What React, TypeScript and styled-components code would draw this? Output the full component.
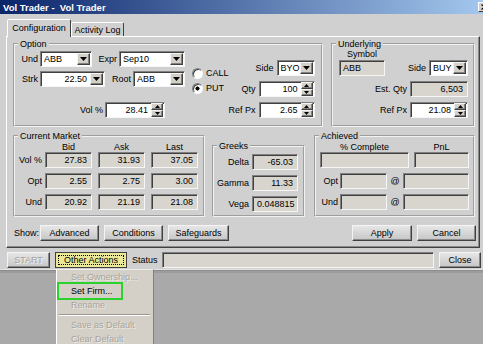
import React from "react";
import styled, { createGlobalStyle, css } from "styled-components";

const GlobalStyle = createGlobalStyle`
  html, body { margin: 0; padding: 0; }
  body {
    background: #a9a9a9;
    font-family: "Liberation Sans", Arial, sans-serif;
    font-size: 9px;
    color: #000;
    overflow: hidden;
  }
`;

const Screen = styled.div`
  position: relative;
  width: 483px;
  height: 344px;
  overflow: hidden;
  background: #a9a9a9;
`;

const Window = styled.div`
  box-sizing: border-box;
  width: 493px;
  height: 270px;
  background: #d0d0d0;
  display: flex;
  flex-direction: column;
  border-bottom: 1px solid #e4e4e4;
  box-shadow: 0 1px 0 #8c8c8c, 0 3px 0 #9c9c9c;
`;

const TitleBar = styled.div`
  height: 14px;
  flex: none;
  display: flex;
  align-items: center;
  justify-content: space-between;
  padding: 0 2px 0 3px;
  background: linear-gradient(to right, #0a246a, #a6caf0);
  color: #fff;
  font-weight: bold;
  font-size: 9.5px;
  white-space: pre;
`;

const CloseBox = styled.div`
  box-sizing: border-box;
  width: 13px;
  height: 10px;
  background: #d4d0c8;
  border: 1px solid;
  border-color: #fff #404040 #404040 #fff;
  display: flex;
  align-items: center;
  justify-content: center;
`;

const Body = styled.div`
  flex: 1;
  display: flex;
  flex-direction: column;
  padding: 5px 13px 0 6px;
`;

const TabStrip = styled.div`
  height: 17px;
  display: flex;
  align-items: flex-end;
  padding-left: 1px;
`;

const Tab = styled.div<{ $active?: boolean; $w: number }>`
  box-sizing: border-box;
  position: relative;
  width: ${(p) => p.$w}px;
  height: ${(p) => (p.$active ? 18 : 14)}px;
  margin-bottom: ${(p) => (p.$active ? -1 : 0)}px;
  z-index: ${(p) => (p.$active ? 1 : 0)};
  display: flex;
  align-items: center;
  justify-content: center;
  padding-bottom: ${(p) => (p.$active ? 2 : 0)}px;
  background: #d0d0d0;
  border: 1px solid;
  border-bottom: none;
  border-color: #fff #404040 transparent #fff;
  border-radius: 2px 2px 0 0;
  white-space: nowrap;
`;

const Panel = styled.div`
  box-sizing: border-box;
  height: 212px;
  flex: none;
  display: flex;
  flex-direction: column;
  padding: 2px 4px 0 6px;
  border: 1px solid;
  border-color: #fff #404040 #404040 #fff;
  box-shadow: inset -1px -1px 0 #8a8a8a;
`;

const GroupRow = styled.div<{ $top?: number }>`
  display: flex;
  align-items: flex-start;
  margin-top: ${(p) => p.$top ?? 0}px;
`;

const Group = styled.fieldset<{ $w: number; $h: number; $ml?: number; $mt?: number }>`
  box-sizing: border-box;
  width: ${(p) => p.$w}px;
  height: ${(p) => p.$h}px;
  margin: ${(p) => p.$mt ?? 0}px 0 0 ${(p) => p.$ml ?? 0}px;
  padding: 0;
  min-width: 0;
  border: 2px groove #f2f2f2;
`;

const Legend = styled.legend`
  padding: 0 2px;
  margin-left: 3px;
  line-height: 10px;
`;

const Row = styled.div<{ $top?: number }>`
  display: flex;
  align-items: center;
  margin-top: ${(p) => p.$top ?? 0}px;
`;

const Label = styled.span<{ $w?: number; $gap?: number }>`
  flex: none;
  ${(p) => (p.$w !== undefined ? `width: ${p.$w}px;` : "")}
  margin-right: ${(p) => p.$gap ?? 3}px;
  text-align: right;
  white-space: nowrap;
`;

const Field = styled.div<{ $w: number; $ro?: boolean }>`
  box-sizing: border-box;
  flex: none;
  width: ${(p) => p.$w}px;
  height: 16px;
  display: flex;
  align-items: center;
  padding: 0 1px 0 1px;
  border: 1px solid;
  border-color: #808080 #f6f6f6 #f6f6f6 #808080;
  box-shadow: inset 1px 1px 0 #404040;
  background: ${(p) => (p.$ro ? "#d8d5cf" : "#fff")};
  overflow: hidden;
`;

const Value = styled.span<{ $right?: boolean }>`
  flex: 1;
  padding: ${(p) => (p.$right ? "0 3px" : "0 1px 0 2px")};
  text-align: ${(p) => (p.$right ? "right" : "left")};
  white-space: nowrap;
  overflow: hidden;
`;

const raised = css`
  background: #d4d0c8;
  border: 1px solid;
  border-color: #f4f4f4 #404040 #404040 #f4f4f4;
  box-shadow: inset -1px -1px 0 #808080;
`;

const DropButton = styled.span`
  box-sizing: border-box;
  flex: none;
  width: 13px;
  height: 12px;
  display: flex;
  align-items: center;
  justify-content: center;
  ${raised}
`;

const SpinButtons = styled.span`
  flex: none;
  width: 12px;
  height: 14px;
  display: flex;
  flex-direction: column;
`;

const SpinButton = styled.span`
  box-sizing: border-box;
  flex: 1;
  display: flex;
  align-items: center;
  justify-content: center;
  ${raised}
`;

const Button = styled.button<{ $w: number; $focus?: boolean }>`
  box-sizing: border-box;
  flex: none;
  width: ${(p) => p.$w}px;
  height: 16px;
  margin: 0;
  padding: 0;
  font: inherit;
  color: #000;
  display: flex;
  align-items: center;
  justify-content: center;
  white-space: nowrap;
  border: 1px solid;
  border-color: #f4f4f4 #404040 #404040 #f4f4f4;
  box-shadow: inset -1px -1px 0 #8a8a8a;
  background: linear-gradient(#e6e6e6, #c6c6c6);
  &:disabled {
    color: #a4a4a4;
    text-shadow: 1px 1px 0 #f2f2f2;
  }
  ${(p) =>
    p.$focus &&
    css`
      border-color: #404040;
      box-shadow: none;
      background: #ebe996;
      outline: 1px dotted #000;
      outline-offset: -4px;
    `}
`;

const OptionBody = styled.div`
  display: flex;
  padding: 2px 7px 0 0;
`;

const Column = styled.div`
  display: flex;
  flex-direction: column;
`;

const RadioCol = styled.div`
  display: flex;
  flex-direction: column;
  gap: 1px;
  margin-left: 7px;
  padding-top: 15px;
`;

const RadioRow = styled.label`
  display: flex;
  align-items: center;
  gap: 3px;
  height: 14px;
`;

const RadioDot = styled.span<{ $on?: boolean }>`
  box-sizing: border-box;
  width: 11px;
  height: 11px;
  border-radius: 50%;
  border: 1px solid;
  border-color: #808080 #fafafa #fafafa #808080;
  box-shadow: inset 1px 1px 0 #404040;
  background: ${(p) =>
    p.$on ? "radial-gradient(circle, #000 0 1.8px, #fff 2.3px)" : "#fff"};
`;

const RightCol = styled.div<{ $top?: number }>`
  margin-left: auto;
  display: flex;
  flex-direction: column;
  align-items: flex-end;
  gap: 5px;
  padding-top: ${(p) => p.$top ?? 0}px;
`;

const UnderBody = styled.div`
  display: flex;
  flex-direction: column;
  padding: 0 5px 0 6px;
`;

const SymbolCol = styled.div`
  display: flex;
  flex-direction: column;
  align-items: center;
`;

const Caption = styled.span`
  line-height: 11px;
`;

const Push = styled.div`
  margin-left: auto;
  align-self: flex-end;
  display: flex;
  align-items: center;
`;

const GridBody = styled.div<{ $pl?: number; $pt?: number }>`
  display: flex;
  flex-direction: column;
  gap: 5px;
  padding-left: ${(p) => p.$pl ?? 0}px;
  padding-top: ${(p) => p.$pt ?? 0}px;
`;

const HeadRow = styled.div`
  display: flex;
  height: 11px;
  align-items: center;
  margin-bottom: -5px;
`;

const Cells = styled.div<{ $gap?: number }>`
  display: flex;
  align-items: center;
  gap: ${(p) => p.$gap ?? 6}px;
`;

const Head = styled.span<{ $w: number }>`
  width: ${(p) => p.$w}px;
  text-align: center;
  white-space: nowrap;
`;

const At = styled.span`
  width: 16px;
  text-align: center;
`;

const ShowRow = styled.div`
  display: flex;
  align-items: center;
  gap: 5px;
  margin: 8px -1px 0 1px;
  height: 16px;
`;

const ShowLabel = styled.span`
  width: 21px;
  white-space: nowrap;
`;

const Spacer = styled.div`
  flex: 1;
`;

const BottomRow = styled.div`
  display: flex;
  align-items: center;
  gap: 5px;
  height: 16px;
  margin: 4px -2px 0 1px;
`;

const StatusLabel = styled.span`
  width: 25px;
`;

const Menu = styled.div`
  position: absolute;
  left: 56px;
  top: 269px;
  width: 98px;
  height: 80px;
  box-sizing: border-box;
  background: #d4d0c8;
  border-left: 1px solid #fff;
  border-top: 1px solid #ececec;
  border-right: 1px solid #808080;
`;

const MenuItem = styled.div<{ $disabled?: boolean }>`
  position: relative;
  height: 14px;
  line-height: 14px;
  padding-left: 14px;
  white-space: nowrap;
  color: ${(p) => (p.$disabled ? "#a8a49c" : "#000")};
  text-shadow: ${(p) => (p.$disabled ? "1px 1px 0 #ecebe6" : "none")};
`;

const Highlight = styled.span`
  position: absolute;
  left: 0;
  top: -2px;
  width: 66px;
  height: 18px;
  box-sizing: border-box;
  border: 2px solid #2bd22b;
`;

const MenuSep = styled.div`
  margin: 2px 3px 2px 2px;
  border-top: 1px solid #9a968e;
  border-bottom: 1px solid #fff;
`;

const ArrowDown = () => (
  <svg width="7" height="4" viewBox="0 0 7 4">
    <path d="M0 0h7L3.5 4z" fill="#000" />
  </svg>
);

const TinyUp = () => (
  <svg width="5" height="3" viewBox="0 0 5 3">
    <path d="M0 3h5L2.5 0z" fill="#000" />
  </svg>
);

const TinyDown = () => (
  <svg width="5" height="3" viewBox="0 0 5 3">
    <path d="M0 0h5L2.5 3z" fill="#000" />
  </svg>
);

type BoxProps = { w: number; value: string; right?: boolean };

const Combo = ({ w, value, right }: BoxProps) => (
  <Field $w={w}>
    <Value $right={right}>{value}</Value>
    <DropButton>
      <ArrowDown />
    </DropButton>
  </Field>
);

const Spin = ({ w, value }: BoxProps) => (
  <Field $w={w}>
    <Value $right>{value}</Value>
    <SpinButtons>
      <SpinButton>
        <TinyUp />
      </SpinButton>
      <SpinButton>
        <TinyDown />
      </SpinButton>
    </SpinButtons>
  </Field>
);

const Box = ({ w, value, right = true }: BoxProps) => (
  <Field $w={w} $ro>
    <Value $right={right}>{value}</Value>
  </Field>
);

const market = [
  { label: "Vol %", vals: ["27.83", "31.93", "37.05"] },
  { label: "Opt", vals: ["2.55", "2.75", "3.00"] },
  { label: "Und", vals: ["20.92", "21.19", "21.08"] },
];

const greeks = [
  { label: "Delta", val: "-65.03" },
  { label: "Gamma", val: "11.33" },
  { label: "Vega", val: "0.048815" },
];

export default function App() {
  return (
    <>
      <GlobalStyle />
      <Screen>
        <Window>
          <TitleBar>
            <span>Vol Trader -  Vol Trader</span>
            <CloseBox>
              <svg width="7" height="6" viewBox="0 0 7 6">
                <path d="M0.5 0.5l6 5M6.5 0.5l-6 5" stroke="#000" strokeWidth="1.3" />
              </svg>
            </CloseBox>
          </TitleBar>
          <Body>
            <TabStrip>
              <Tab $active $w={64}>Configuration</Tab>
              <Tab $w={53}>Activity Log</Tab>
            </TabStrip>
            <Panel>
              <GroupRow>
                <Group $w={310} $h={88}>
                  <Legend>Option</Legend>
                  <OptionBody>
                    <Column>
                      <Row>
                        <Label $w={23} $gap={2}>Und</Label>
                        <Combo w={52} value="ABB" />
                        <Label $w={25} $gap={2}>Expr</Label>
                        <Combo w={66} value="Sep10" />
                      </Row>
                      <Row $top={4}>
                        <Label $w={23} $gap={2}>Strk</Label>
                        <Combo w={65} value="22.50" right />
                        <Label $w={26} $gap={2}>Root</Label>
                        <Combo w={52} value="ABB" />
                      </Row>
                      <Row $top={15}>
                        <Label $w={88} $gap={2}>Vol %</Label>
                        <Spin w={60} value="28.41" />
                      </Row>
                    </Column>
                    <RadioCol>
                      <RadioRow>
                        <RadioDot />
                        CALL
                      </RadioRow>
                      <RadioRow>
                        <RadioDot $on />
                        PUT
                      </RadioRow>
                    </RadioCol>
                    <RightCol $top={9}>
                      <Row>
                        <Label $gap={3}>Side</Label>
                        <Combo w={38} value="BYO" />
                      </Row>
                      <Row>
                        <Label>Qty</Label>
                        <Spin w={56} value="100" />
                      </Row>
                      <Row>
                        <Label>Ref Px</Label>
                        <Spin w={56} value="2.65" />
                      </Row>
                    </RightCol>
                  </OptionBody>
                </Group>
                <Group $w={144} $h={88} $ml={8}>
                  <Legend>Underlying</Legend>
                  <UnderBody>
                    <Row>
                      <SymbolCol>
                        <Caption>Symbol</Caption>
                        <Box w={46} value="ABB" right={false} />
                      </SymbolCol>
                      <Push>
                        <Label>Side</Label>
                        <Combo w={39} value="BUY" />
                      </Push>
                    </Row>
                    <RightCol $top={5}>
                      <Row>
                        <Label>Est. Qty</Label>
                        <Box w={58} value="6,503" />
                      </Row>
                      <Row>
                        <Label>Ref Px</Label>
                        <Spin w={58} value="21.08" />
                      </Row>
                    </RightCol>
                  </UnderBody>
                </Group>
              </GroupRow>
              <GroupRow $top={4}>
                <Group $w={192} $h={86}>
                  <Legend>Current Market</Legend>
                  <GridBody>
                    <HeadRow>
                      <Label $w={27} $gap={3} />
                      <Cells>
                        <Head $w={47}>Bid</Head>
                        <Head $w={47}>Ask</Head>
                        <Head $w={47}>Last</Head>
                      </Cells>
                    </HeadRow>
                    {market.map((m) => (
                      <Row key={m.label}>
                        <Label $w={27} $gap={3}>{m.label}</Label>
                        <Cells>
                          {m.vals.map((v) => (
                            <Box key={v + m.label} w={47} value={v} />
                          ))}
                        </Cells>
                      </Row>
                    ))}
                  </GridBody>
                </Group>
                <Group $w={93} $h={76} $ml={7} $mt={10}>
                  <Legend>Greeks</Legend>
                  <GridBody $pt={3}>
                    {greeks.map((g) => (
                      <Row key={g.label}>
                        <Label $w={35} $gap={3}>{g.label}</Label>
                        <Box w={46} value={g.val} />
                      </Row>
                    ))}
                  </GridBody>
                </Group>
                <Group $w={161} $h={86} $ml={9}>
                  <Legend>Achieved</Legend>
                  <GridBody $pl={4}>
                    <HeadRow>
                      <Cells $gap={5}>
                        <Head $w={89}>% Complete</Head>
                        <Head $w={55}>PnL</Head>
                      </Cells>
                    </HeadRow>
                    <Cells $gap={5}>
                      <Box w={89} value="" />
                      <Box w={55} value="" />
                    </Cells>
                    {["Opt", "Und"].map((l) => (
                      <Row key={l}>
                        <Label $w={18} $gap={2}>{l}</Label>
                        <Box w={47} value="" />
                        <At>@</At>
                        <Box w={66} value="" />
                      </Row>
                    ))}
                  </GridBody>
                </Group>
              </GroupRow>
              <ShowRow>
                <ShowLabel>Show:</ShowLabel>
                <Button $w={59}>Advanced</Button>
                <Button $w={59}>Conditions</Button>
                <Button $w={61}>Safeguards</Button>
                <Spacer />
                <Button $w={60}>Apply</Button>
                <Button $w={59}>Cancel</Button>
              </ShowRow>
            </Panel>
            <BottomRow>
              <Button $w={43} disabled>
                START
              </Button>
              <Button $w={72} $focus>
                Other Actions
              </Button>
              <StatusLabel>Status</StatusLabel>
              <Field $w={272} $ro />
              <Button $w={42}>Close</Button>
            </BottomRow>
          </Body>
        </Window>
        <Menu>
          <MenuItem $disabled>Set Ownership...</MenuItem>
          <MenuItem>
            <Highlight />
            Set Firm...
          </MenuItem>
          <MenuItem $disabled>Rename</MenuItem>
          <MenuSep />
          <MenuItem $disabled>Save as Default</MenuItem>
          <MenuItem $disabled>Clear Default</MenuItem>
        </Menu>
      </Screen>
    </>
  );
}
